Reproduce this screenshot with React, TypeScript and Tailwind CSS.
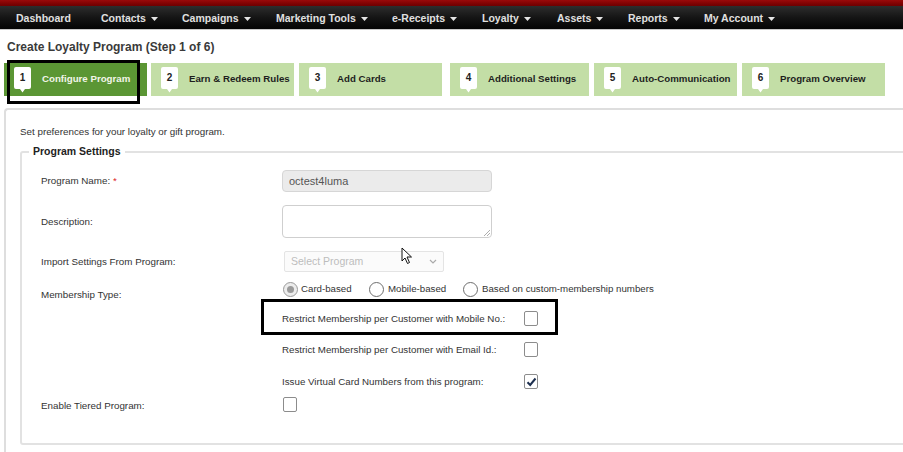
import React from "react";

const navItems: { label: string; w: string; caret: boolean }[] = [
  { label: "Dashboard", w: "w-[85px]", caret: false },
  { label: "Contacts", w: "w-[81px]", caret: true },
  { label: "Campaigns", w: "w-[94px]", caret: true },
  { label: "Marketing Tools", w: "w-[116px]", caret: true },
  { label: "e-Receipts", w: "w-[90px]", caret: true },
  { label: "Loyalty", w: "w-[75px]", caret: true },
  { label: "Assets", w: "w-[71px]", caret: true },
  { label: "Reports", w: "w-[76px]", caret: true },
  { label: "My Account", w: "w-[90px]", caret: true },
];

const steps: { n: number; label: string; ml: string; w: string }[] = [
  { n: 1, label: "Configure Program", ml: "ml-[4px]", w: "w-[143px]" },
  { n: 2, label: "Earn & Redeem Rules", ml: "ml-[4px]", w: "w-[143px]" },
  { n: 3, label: "Add Cards", ml: "ml-[5px]", w: "w-[143px]" },
  { n: 4, label: "Additional Settings", ml: "ml-[8px]", w: "w-[139px]" },
  { n: 5, label: "Auto-Communication", ml: "ml-[5px]", w: "w-[143px]" },
  { n: 6, label: "Program Overview", ml: "ml-[5px]", w: "w-[143px]" },
];

function Caret() {
  return (
    <svg width="7" height="4" viewBox="0 0 7 4" className="ml-[5px] mt-[1px]">
      <path d="M0 0 L7 0 L3.5 4 Z" fill="#e6e6e6" />
    </svg>
  );
}

function Badge({ n }: { n: number }) {
  return (
    <div className="relative w-[17px] h-[26px] shrink-0">
      <svg width="17" height="26" viewBox="0 0 17 26" className="absolute left-0 top-0">
        <path
          d="M2 0 H15 Q17 0 17 2 V20 Q17 22 15 22 H11 L8.5 25.5 L6 22 H2 Q0 22 0 20 V2 Q0 0 2 0 Z"
          fill="#ffffff"
        />
      </svg>
      <span className="absolute left-0 top-[5px] w-[17px] text-center text-[10px] font-bold text-[#222] leading-[12px]">
        {n}
      </span>
    </div>
  );
}

function Checkbox({ checked }: { checked?: boolean }) {
  return (
    <div className="w-[14px] h-[15px] rounded-[2px] border border-[#8c8c8c] bg-white flex items-center justify-center">
      {checked && (
        <svg width="11" height="10" viewBox="0 0 11 10">
          <path d="M1.5 5.2 L4.2 8 L9.5 1.5" fill="none" stroke="#1d2f4f" strokeWidth="2" />
        </svg>
      )}
    </div>
  );
}

function Radio({ checked }: { checked?: boolean }) {
  return checked ? (
    <div className="w-[15px] h-[15px] shrink-0 rounded-full border-[1.5px] border-[#9a9a9a] bg-[#ececec] flex items-center justify-center">
      <div className="w-[7px] h-[7px] rounded-full bg-[#9a9a9a]" />
    </div>
  ) : (
    <div className="w-[15px] h-[15px] shrink-0 rounded-full border-[1.5px] border-[#6e6e6e] bg-white" />
  );
}

export default function App() {
  return (
    <div className="relative w-[903px] h-[452px] overflow-hidden bg-white font-['Liberation_Sans',Arial,sans-serif] text-[#333]">
      {/* top red bar */}
      <div className="h-[6px] bg-gradient-to-b from-[#9a0a0a] to-[#6e0000]" />
      {/* nav */}
      <div className="h-[24px] bg-gradient-to-b from-[#2e2e2e] via-[#151515] to-[#050505] flex items-center pl-[16px] pt-[2px] border-b border-[#c8c8c8]">
        {navItems.map((it) => (
          <div key={it.label} className={`${it.w} shrink-0 flex items-center`}>
            <span className="text-[10.5px] font-bold text-[#e0e0e0] leading-none">{it.label}</span>
            {it.caret && <Caret />}
          </div>
        ))}
      </div>

      {/* title */}
      <div className="pl-[7px] mt-[9px] h-[16px] text-[12px] font-bold text-[#3a3a3a] leading-[16px]">
        Create Loyalty Program (Step 1 of 6)
      </div>

      {/* steps */}
      <div className="flex mt-[8px] h-[33px]">
        {steps.map((s) => (
          <div
            key={s.n}
            className={`${s.ml} ${s.w} h-[33px] shrink-0 flex items-center pl-[10px] ${
              s.n === 1 ? "bg-[#5b9634]" : "bg-[#c3dea6]"
            }`}
          >
            <Badge n={s.n} />
            <span
              className={`ml-[11px] text-[9.7px] font-bold whitespace-nowrap ${
                s.n === 1 ? "text-[#f2f5e8]" : "text-[#1e1e1e]"
              }`}
            >
              {s.label}
            </span>
          </div>
        ))}
      </div>

      {/* panel */}
      <div className="ml-[4px] mt-[12px] w-[940px] h-[400px] border-l-2 border-t-2 border-[#dedede] rounded-tl-[4px] pl-[14px]">
        <div className="mt-[15px] text-[9.8px] text-[#333] leading-[14px]">
          Set preferences for your loyalty or gift program.
        </div>
        {/* fieldset */}
        <div className="relative mt-[12px] w-[920px] h-[294px] border-2 border-[#e2e2e2] rounded-[3px] pl-[19px]">
          <div className="absolute left-[7px] top-[-9px] bg-white px-[4px] text-[10.5px] font-bold text-[#222] leading-[14px]">
            Program Settings
          </div>

          {/* Program name */}
          <div className="flex items-center mt-[17px] h-[22px]">
            <div className="w-[241px] text-[9.8px] leading-none">
              Program Name: <span className="text-[#d22]">*</span>
            </div>
            <div className="w-[210px] h-[22px] rounded-[4px] border border-[#d6d6d6] bg-[#ebebeb] flex items-center pl-[6px] text-[11px] text-[#555]">
              octest4luma
            </div>
          </div>

          {/* Description */}
          <div className="flex items-center mt-[13px] h-[33px]">
            <div className="w-[241px] text-[9.8px] leading-none">Description:</div>
            <div className="relative w-[210px] h-[33px] rounded-[4px] border border-[#cfcfcf] bg-white">
              <svg width="6" height="6" viewBox="0 0 6 6" className="absolute right-[1px] bottom-[1px]">
                <path d="M6 0 L0 6 M6 3 L3 6" stroke="#999" strokeWidth="0.8" />
              </svg>
            </div>
          </div>

          {/* Import */}
          <div className="flex items-center mt-[13px] h-[21px]">
            <div className="w-[243px] text-[9.8px] leading-none">Import Settings From Program:</div>
            <div className="w-[160px] h-[21px] rounded-[2px] border border-[#e4e4e4] bg-[#fbfbfb] flex items-center justify-between pl-[6px] pr-[6px] text-[10.5px] text-[#bdbdbd]">
              <span>Select Program</span>
              <svg width="8" height="5" viewBox="0 0 8 5">
                <path d="M1 1 L4 4 L7 1" fill="none" stroke="#aaa" strokeWidth="1.2" />
              </svg>
            </div>
          </div>

          {/* Membership type */}
          <div className="flex mt-[9px] h-[17px]">
            <div className="w-[242px] text-[9.8px] leading-none pt-[9px]">Membership Type:</div>
            <div className="flex items-center h-[17px] text-[9.7px] text-[#333] whitespace-nowrap">
              <Radio checked />
              <span className="ml-[3px] w-[68px]">Card-based</span>
              <Radio />
              <span className="ml-[4px] w-[75px]">Mobile-based</span>
              <Radio />
              <span className="ml-[4px]">Based on custom-membership numbers</span>
            </div>
          </div>

          {/* sub rows */}
          {[
            { label: "Restrict Membership per Customer with Mobile No.:", checked: false, mt: "mt-[13px]" },
            { label: "Restrict Membership per Customer with Email Id.:", checked: false, mt: "mt-[16px]" },
            { label: "Issue Virtual Card Numbers from this program:", checked: true, mt: "mt-[17px]" },
          ].map((r) => (
            <div key={r.label} className={`flex items-center ${r.mt} h-[15px]`}>
              <div className="w-[241px]" />
              <div className="w-[242px] text-[9.75px] leading-none">{r.label}</div>
              <Checkbox checked={r.checked} />
            </div>
          ))}

          {/* Tiered */}
          <div className="flex items-center mt-[8px] h-[15px]">
            <div className="w-[242px] text-[9.8px] leading-none pt-[3px]">Enable Tiered Program:</div>
            <Checkbox />
          </div>
        </div>
      </div>

      {/* annotation boxes */}
      <div className="absolute left-[7px] top-[60px] w-[133px] h-[44px] border-[3px] border-black" />
      <div className="absolute left-[261px] top-[299px] w-[297px] h-[36px] border-[3px] border-black" />

      {/* mouse cursor */}
      <svg width="12" height="18" viewBox="0 0 12 18" className="absolute left-[401px] top-[247px]">
        <path d="M1 1 L1 14 L4 11 L6.5 16.5 L8.5 15.5 L6 10 L10.5 10 Z" fill="#fff" stroke="#111" strokeWidth="1" />
      </svg>
    </div>
  );
}
